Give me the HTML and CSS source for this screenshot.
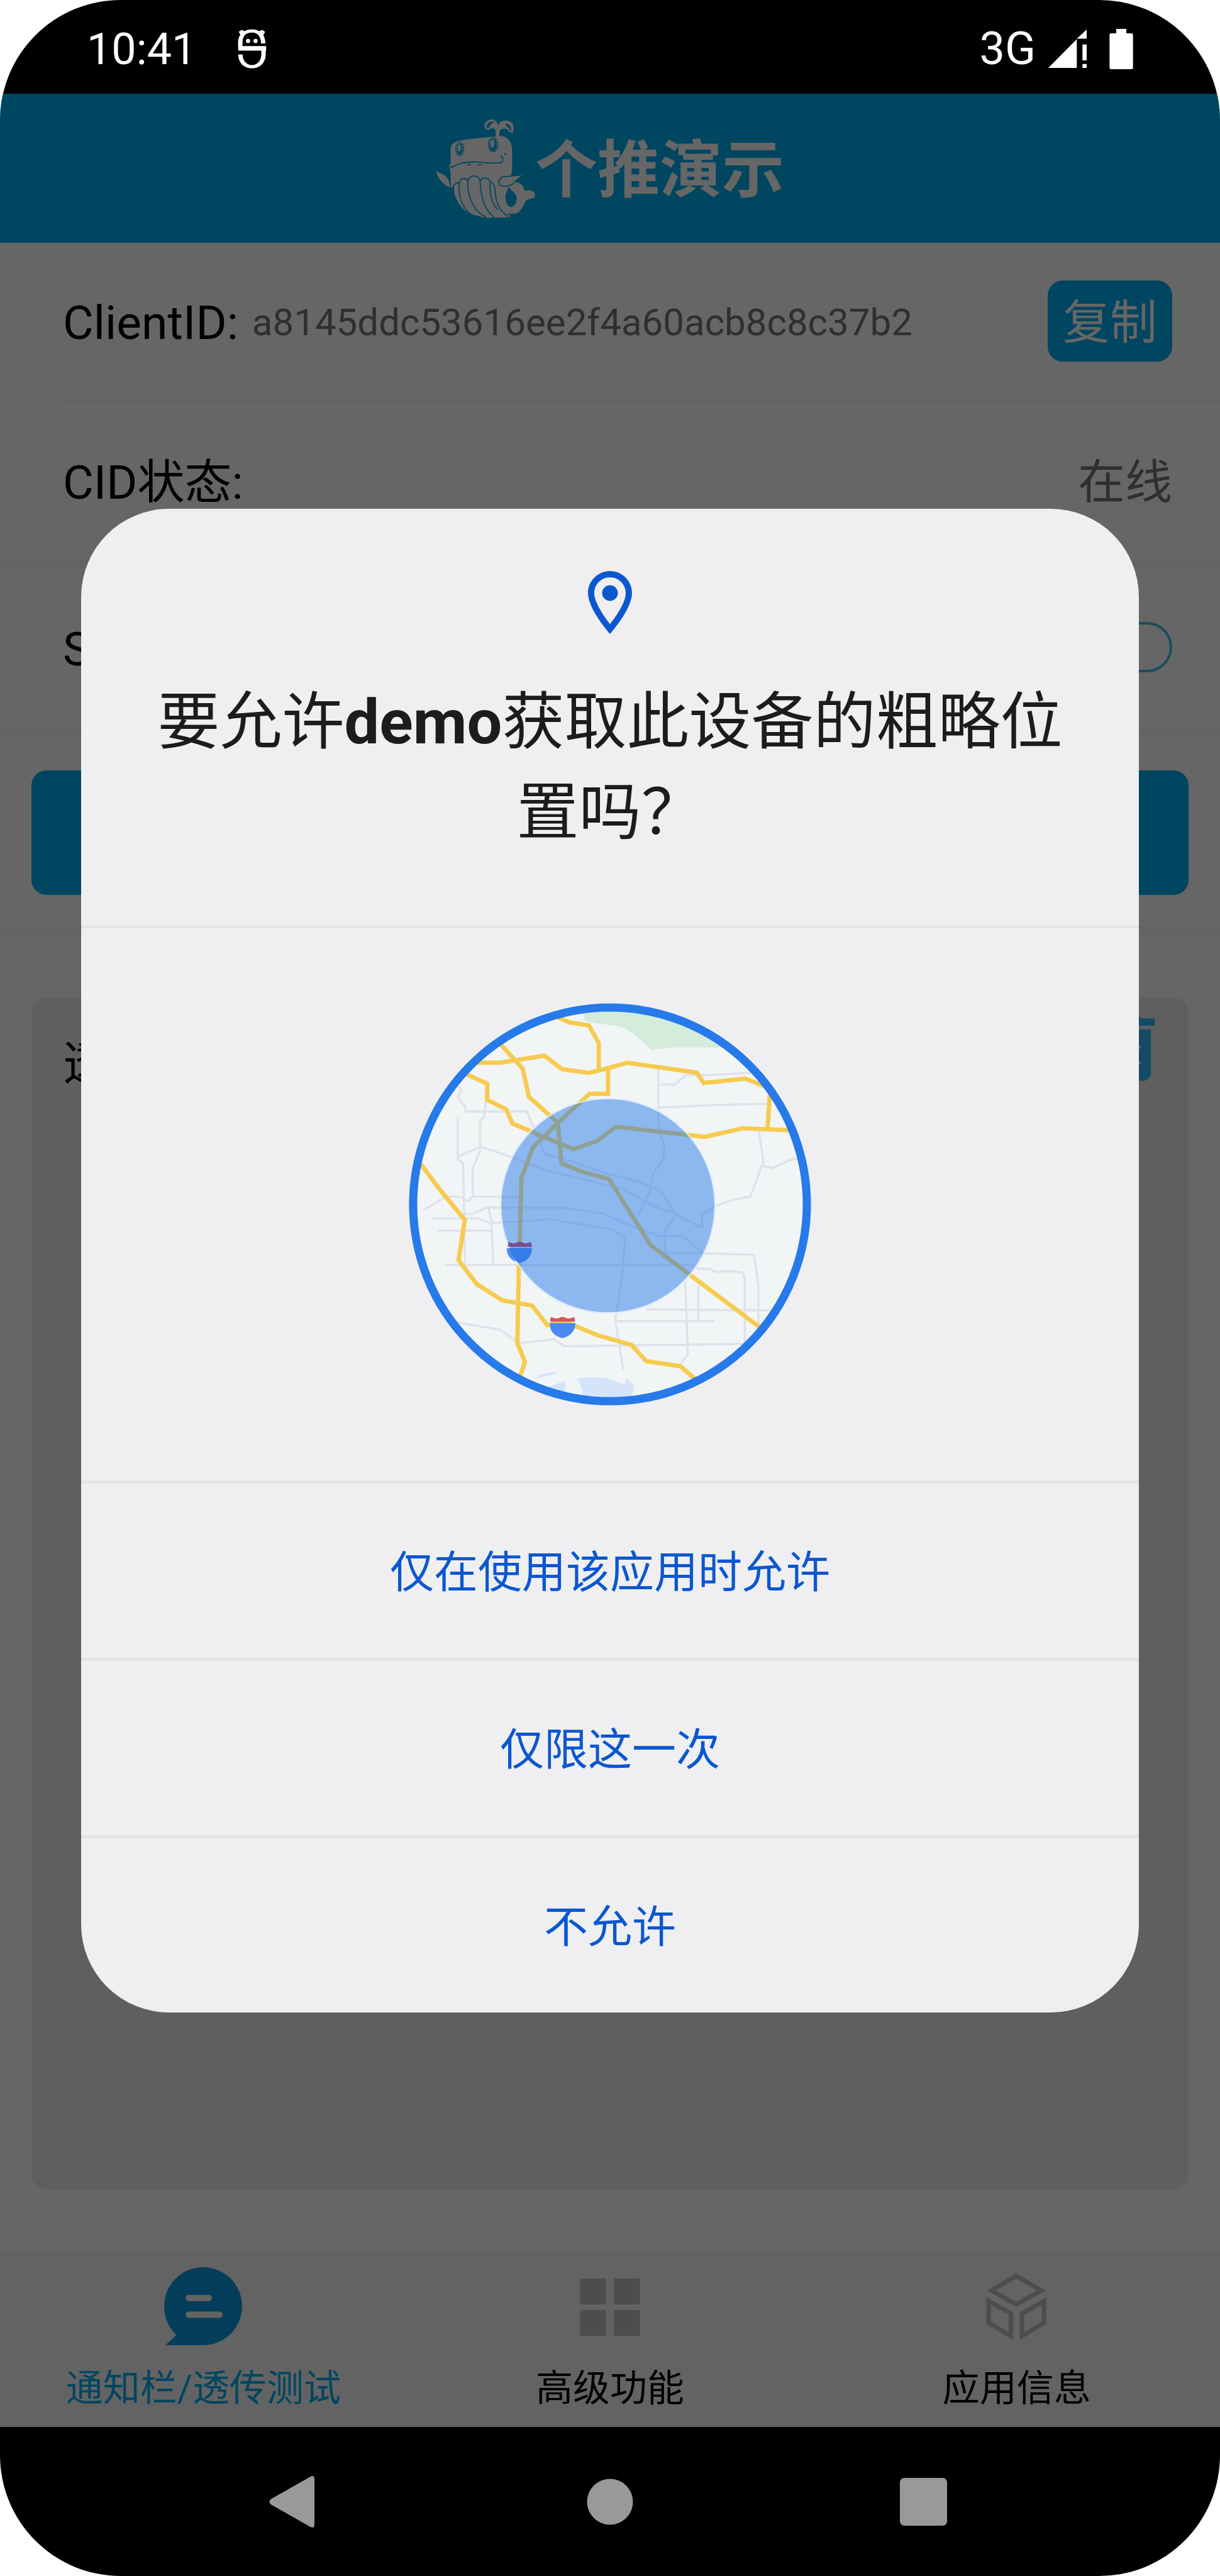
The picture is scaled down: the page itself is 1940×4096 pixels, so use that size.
FILE: index.html
```html
<!DOCTYPE html>
<html lang="zh-CN">
<head>
    <meta charset="UTF-8">
    <meta name="viewport" content="width=device-width, initial-scale=1.0">
    <title>个推演示</title>
    <link rel="stylesheet" href="styles.css">
</head>
<body>
    <div class="phone">
        <div class="status-bar">
            <span class="time">10:41</span>
            <svg class="debug-icon" viewBox="918 152 112 216" preserveAspectRatio="none">
                <path d="M928 250V222C930 182 950 166 973 166S1015 182 1017 232M928 258H1018V290C1016 335 996 355 973 355S930 335 928 290" fill="none" stroke="#fff" stroke-width="17"/>
                <path d="M920 246h108v24h-108zM922 170l12-10 18 14-20 22zM1024 170l-12-10-18 14 20 22z" fill="#fff"/>
                <ellipse cx="958" cy="219" rx="8" ry="11" fill="#fff"/>
                <ellipse cx="987" cy="219" rx="8" ry="11" fill="#fff"/>
            </svg>
            <span class="network">3G</span>
            <svg class="signal-icon" viewBox="0 0 68 68">
                <path d="M0 68L50.5 17V68zM50.5 16.300L68 0V16.300zM60.500 26.500H68V54.500H60.500zM60.500 61H68V68H60.500z" fill="#fff"/>
            </svg>
            <svg class="battery-icon" viewBox="0 0 42 72">
                <path d="M12 0H30V8H39a3 3 0 0 1 3 3V69a3 3 0 0 1-3 3H3a3 3 0 0 1-3-3V11a3 3 0 0 1 3-3H12z" fill="#fff"/>
            </svg>
        </div>

        <div class="app">
            <header class="app-header">
                <!-- whale logo -->
                <svg class="logo" viewBox="18 16 530 530">
                    <g fill="#fff">
                        <path d="M98 382L96 300L90 262L97 255V180C98 155 112 142 132 136L180 126L298 113L365 107C400 108 420 135 425 175V290L419 322L480 314L432 354C470 352 486 372 492 400C515 392 540 398 546 416V436C530 440 508 444 496 456C486 480 470 510 446 521L400 522L420 538L380 543H330L285 544C220 530 180 520 150 480C120 440 114 410 115 372L104 384z"/>
                        <path d="M18 294L66 318C86 334 90 350 93 382C50 360 28 330 18 294z"/>
                        <path d="M338 112V78C330 62 314 62 302 74C282 78 272 56 281 38C295 16 330 12 344 36L351 52L358 38C374 20 410 20 426 40C436 56 434 80 428 88C412 94 408 82 402 74C386 64 366 66 358 82L356 112z"/>
                    </g>
                    <g fill="#00aeef">
                        <ellipse cx="146" cy="177" rx="24" ry="38"/>
                        <ellipse cx="324" cy="154" rx="28" ry="41"/>
                        <path d="M404 380L412 384C422 402 450 412 450 436C448 470 434 486 415 486C396 480 388 450 390 424C392 408 402 402 404 380z"/>
                        <path d="M289 66C286 36 312 24 334 34C318 38 304 48 301 66zM392 40C410 42 424 58 420 82C412 80 412 62 392 50z"/>
                    </g>
                    <g fill="none" stroke="#00aeef" stroke-width="6" stroke-linecap="round" stroke-linejoin="round">
                        <path d="M98 268L104 277C130 254 180 244 240 246C290 250 340 258 370 247C382 232 374 216 364 214M386 200l6 8M188 261h14M242 261h20"/>
                        <path d="M108 382C112 368 126 354 142 358M145 356C150 330 176 328 189 345M191 345C198 314 240 312 254 344M258 342C272 326 300 328 306 352C326 356 332 370 334 400C336 450 350 500 400 534"/>
                        <path d="M142 360C138 430 160 490 206 526M188 348C186 430 220 510 286 541M254 346C258 440 284 510 330 541M308 356C304 430 318 470 350 500"/>
                        <path d="M470 316L395 324C360 320 345 350 362 372C385 378 410 378 434 360"/>
                    </g>
                    <g fill="none" stroke="#fff" stroke-width="5">
                        <ellipse cx="146" cy="177" rx="18" ry="32" stroke-dasharray="12 5"/>
                        <ellipse cx="324" cy="154" rx="22" ry="35" stroke-dasharray="12 5"/>
                        <path d="M340 60V106"/>
                    </g>
                    <path d="M134 160l14-8 6 20-10 22-8-8zM308 140l16-16 8 24-8 22-12-6z" fill="#fff"/>
                </svg>
                <h1>个推演示</h1>
            </header>

            <div class="row">
                <span class="label">ClientID:</span>
                <span class="cid">a8145ddc53616ee2f4a60acb8c8c37b2</span>
                <button class="copy-btn" type="button">复制</button>
            </div>
            <div class="divider-thin"></div>
            <div class="row">
                <span class="label">CID状态:</span>
                <span class="value">在线</span>
            </div>
            <div class="divider"></div>
            <div class="row row-switch">
                <label class="label" for="sdk-switch">SDK开关:</label>
                <input class="switch" id="sdk-switch" type="checkbox" checked>
            </div>
            <div class="divider"></div>
            <div class="action">
                <button class="action-btn" type="button" aria-label="通知栏测试"></button>
            </div>
            <div class="divider"></div>

            <section class="log-card">
                <h2 class="label">透传</h2>
                <button class="trash-btn" type="button" aria-label="清除">
                    <svg viewBox="0 0 24 24" preserveAspectRatio="none">
                        <path d="M6 19c0 1.100.9 2 2 2h8c1.100 0 2-.9 2-2V7H6v12zm2.460-7.120l1.410-1.410L12 12.590l2.120-2.120 1.410 1.410L13.410 14l2.120 2.120-1.410 1.410L12 15.410l-2.120 2.120-1.410-1.410L10.590 14l-2.130-2.120zM15.500 4l-1-1h-5l-1 1H5v2h14V4z" fill="#32bbf8"/>
                    </svg>
                </button>
            </section>

            <nav class="tabs">
                <a class="tab active" href="#push">
                    <svg viewBox="0 0 138 138">
                        <path d="M2 138L22 120C8 107 0 90 0 69a69 69 0 1 1 81 68L72 138z" fill="#0d9be4"/>
                        <path d="M43.500 54.500H79M43.500 84H98" stroke="#f7f7f7" stroke-width="11" stroke-linecap="round"/>
                    </svg>
                    <span>通知栏/透传测试</span>
                </a>
                <a class="tab" href="#advanced">
                    <svg viewBox="0 0 138 138">
                        <g fill="#c0c0c0">
                            <rect x="16" y="20" width="46" height="46" rx="2"/>
                            <rect x="76" y="20" width="46" height="46" rx="2"/>
                            <rect x="16" y="76" width="46" height="46" rx="2"/>
                            <rect x="76" y="76" width="46" height="46" rx="2"/>
                        </g>
                    </svg>
                    <span>高级功能</span>
                </a>
                <a class="tab" href="#info">
                    <svg viewBox="0 0 138 138">
                        <path d="M68 15.500L112 41L68 66L24 41zM19 60L58.500 82V122L19 98zM117 60L78 82V122L117 98z" fill="none" stroke="#c0c0c0" stroke-width="8"/>
                    </svg>
                    <span>应用信息</span>
                </a>
            </nav>

            <div class="scrim">
                <div class="dialog" role="dialog" aria-labelledby="dialog-title">
                    <div class="dialog-head">
                        <svg class="pin" viewBox="0 0 24 24" fill="#0b57d0">
                            <path d="M12 2C8.130 2 5 5.130 5 9c0 5.250 7 13 7 13s7-7.750 7-13c0-3.870-3.130-7-7-7zM7 9c0-2.760 2.240-5 5-5s5 2.240 5 5c0 2.880-2.880 7.190-5 9.880C9.920 16.210 7 11.850 7 9z"/>
                            <circle cx="12" cy="9" r="2.500"/>
                        </svg>
                        <h2 class="dialog-title" id="dialog-title">要允许<strong>demo</strong>获取此设备的粗略位置吗&#xFF1F;</h2>
                    </div>
                    <div class="dialog-map">
                        <svg class="map" viewBox="50 50 1470 1472">
                            <clipPath id="map-clip"><circle cx="785" cy="786" r="712"/></clipPath>
                            <g clip-path="url(#map-clip)">
                                <rect x="50" y="50" width="1470" height="1472" fill="#f2f5f6"/>
                                <path d="M685 60L693 115C740 128 800 130 830 138C870 155 900 190 935 220L1020 212L1220 212V60z" fill="#d3ecdc"/>
                                <path d="M660 1425C700 1412 770 1418 800 1430L838 1445L845 1420L872 1445C878 1465 860 1480 862 1500H690C680 1480 690 1450 660 1425zM512 1425C530 1400 565 1402 598 1398C580 1412 545 1414 512 1425zM555 1455L620 1432L624 1480z" fill="#d5e4fb"/>
                                <g fill="none" stroke="#e0e1e9" stroke-width="8" stroke-linejoin="round">
                                    <path d="M232 355L240 370L228 392L256 430V446H480L505 505L545 600L620 622L780 675L890 702L970 738L1027 822L986 884V962L1312 970L1328 1085V1225"/>
                                    <path d="M228 465V620L248 636L255 1005M228 612L312 575L430 615L545 660L680 692L830 730L950 795L1010 815L1122 872V826L1165 795L1225 772L1298 758L1346 630L1330 520M1346 645L1378 654L1440 625L1490 615M333 395L325 465L310 482V588L283 655V755L265 775L235 758H185L102 808M283 758H450"/>
                                    <path d="M255 822L285 820L340 795L360 798H610L760 820L870 868L965 902H1050L1122 960M134 838H300L345 854L440 850L560 840L660 856L800 880L840 912L830 1040L804 1210L820 1310L834 1390M340 795L352 855L358 1005M153 882H352"/>
                                    <path d="M182 1008H1085L1110 1022H1150L1172 1034L1220 1030L1270 1036L1278 1055V1290M962 290V520L985 570L980 620L945 670L930 740L885 835M962 348H1022L1062 314L1160 312L1310 304M962 432L1190 422L1370 418"/>
                                    <path d="M1060 1070L1070 1332L1045 1368M1108 1085V1210M918 1170L1380 1174M804 1213H1168M225 1218L385 1245L450 1294L580 1280L620 1305L1290 1296"/>
                                </g>
                                <g fill="none" stroke="#f6cb4f" stroke-width="16" stroke-linejoin="miter">
                                    <path d="M590 100L635 120L708 132L744 196V292M290 268H385L545 242L610 292L708 305L770 290L848 268L1102 304L1128 342L1280 326L1360 358M1370 380L1361 512"/>
                                    <path d="M380 195L466 290L488 392L594 488L608 636L680 666L782 694L933 935L1075 1042L1345 1245"/>
                                    <path d="M250 305L336 345V404L405 438L428 490L545 540L652 585L742 552L806 502L1132 539L1270 508L1450 515M778 288V382H710L594 488L503 578L461 690L455 930M452 1000L446 1294L474 1362L455 1420"/>
                                    <path d="M85 628L165 735L254 843L231 990L298 1078L392 1137L500 1156L556 1228L620 1215L740 1265L864 1300L918 1360L1042 1378L1110 1436"/>
                                </g>
                                <path d="M566 1220H658C660 1250 635 1270 611 1275C585 1270 562 1250 566 1220z" fill="#4a8af4"/>
                                <path d="M568 1198L590 1204L611 1197L634 1204L655 1198L657 1215H566z" fill="#d35a50"/>
                                <path d="M408 946H499C500 976 478 996 454 1000C430 996 405 976 408 946z" fill="#4a8af4"/>
                                <path d="M412 924L434 930L454 922L476 930L496 924L499 942H410z" fill="#9a4a78"/>
                                <circle cx="777" cy="791" r="392" fill="#1b73e8" fill-opacity=".47" stroke="#dcebfc" stroke-width="5"/>
                                <path d="M415 946H499C500 976 478 996 454 1000C440 996 428 980 415 946z" fill="#347de6"/>
                                <path d="M414 924L434 930L454 922L476 930L496 924L499 940H412z" fill="#7a4d8c"/>
                            </g>
                            <circle cx="785" cy="786" r="720" fill="none" stroke="#267ae9" stroke-width="30"/>
                        </svg>
                    </div>
                    <button class="dialog-btn" type="button">仅在使用该应用时允许</button>
                    <button class="dialog-btn" type="button">仅限这一次</button>
                    <button class="dialog-btn" type="button">不允许</button>
                </div>
            </div>
        </div>

        <div class="nav-bar">
            <button type="button" aria-label="返回">
                <svg viewBox="0 0 120 120"><path d="M21 55L81 21Q89 16 89 24V96Q89 104 81 99L21 65Q14 60 21 55z" fill="#999"/></svg>
            </button>
            <button type="button" aria-label="主屏幕">
                <svg viewBox="0 0 120 120"><circle cx="60" cy="60" r="36.500" fill="#999"/></svg>
            </button>
            <button type="button" aria-label="最近任务">
                <svg viewBox="0 0 120 120"><rect x="22" y="22" width="75" height="76" rx="7" fill="#999"/></svg>
            </button>
        </div>
    </div>
</body>
</html>
```
FILE: styles.css
```css
* {
    box-sizing: border-box;
}
body {
    margin: 0;
    background: #fff;
    font-family: Roboto, "Noto Sans CJK SC", sans-serif;
    color: #000;
}
button {
    border: none;
    padding: 0;
    background: none;
    font-family: inherit;
    cursor: pointer;
}
svg {
    display: block;
    flex-shrink: 0;
}
h1, h2 {
    margin: 0;
}
.phone {
    display: flex;
    flex-direction: column;
    min-height: 100vh;
    background: #000;
    border-radius: 192px;
    overflow: hidden;
}

/* system status bar */
.status-bar {
    display: flex;
    align-items: center;
    height: 149px;
    padding: 6px 138px 0 138px;
    color: #fff;
    font-size: 70px;
}
.debug-icon {
    width: 46px;
    height: 65px;
    margin-left: 66px;
}
.network {
    margin-left: auto;
    font-size: 72px;
}
.signal-icon {
    width: 61px;
    height: 61px;
    margin-left: 20px;
}
.battery-icon {
    width: 38px;
    height: 64px;
    margin-left: 36px;
}

/* app */
.app {
    position: relative;
    display: flex;
    flex: 1;
    flex-direction: column;
    background: #fff;
}
.app-header {
    display: flex;
    align-items: center;
    justify-content: center;
    height: 237px;
    background: #00aeef;
    color: #fff;
}
.logo {
    width: 158px;
    height: 158px;
}
.app-header h1 {
    padding-top: 6px;
    font-size: 99px;
    font-weight: 700;
    line-height: 144px;
}
.row {
    display: flex;
    align-items: center;
    min-height: 248px;
    padding: 0 76px 0 100px;
    line-height: 110px;
}
.row-switch {
    min-height: 254px;
}
.label {
    padding-top: 6px;
    font-size: 75px;
    font-weight: 400;
}
.cid {
    margin-left: 22px;
    padding-top: 6px;
    font-size: 60px;
    color: #757575;
}
.value {
    margin-left: auto;
    padding-top: 6px;
    font-size: 75px;
    color: #757575;
}
.copy-btn {
    margin-left: auto;
    padding: 5px 24px 0;
    border-radius: 24px;
    background: #00aeef;
    color: #fff;
    font-size: 75px;
    line-height: 124px;
}
.divider-thin {
    height: 6px;
    margin-left: 100px;
    background: #f7f7f7;
}
.divider {
    height: 14px;
    background: #f7f7f7;
}
.switch {
    appearance: none;
    width: 150px;
    height: 80px;
    margin: 0 0 0 auto;
    border: 4px solid #46b9e8;
    border-radius: 40px;
}
.action {
    padding: 55px 50px 50px;
}
.action-btn {
    display: block;
    width: 100%;
    height: 198px;
    border-radius: 24px;
    background: #00aeef;
}
.log-card {
    display: flex;
    flex: 1;
    align-items: flex-start;
    justify-content: space-between;
    margin: 99px 50px;
    padding: 10px 22px 0 50px;
    border-radius: 24px;
    background: #eee;
    line-height: 110px;
}
.log-card .label {
    padding-top: 40px;
}
.trash-btn svg {
    width: 151px;
    height: 140px;
}
.tabs {
    display: grid;
    grid-template-columns: repeat(3, 1fr);
    background: #f7f7f7;
}
.tab {
    display: flex;
    flex-direction: column;
    align-items: center;
    gap: 26px;
    padding: 25px 0 18px;
    color: #000;
    font-size: 59px;
    line-height: 86px;
    text-decoration: none;
}
.tab svg {
    width: 124px;
    height: 124px;
}
.tab.active {
    color: #00aeef;
}

/* permission dialog */
.scrim {
    position: absolute;
    inset: 0;
    display: flex;
    align-items: center;
    justify-content: center;
    padding: 0 129px;
    background: rgba(0, 0, 0, 0.6);
}
.dialog {
    flex: 1;
    border-radius: 140px;
    background: #efeff1;
    overflow: hidden;
}
.dialog-head {
    padding: 89px 100px 107px;
}
.pin {
    width: 120px;
    height: 120px;
    margin: 0 auto 58px;
}
.dialog-title {
    color: #1a1c1e;
    font-size: 99px;
    font-weight: 400;
    line-height: 144px;
    text-align: center;
}
.dialog-map {
    padding: 119px 0;
    border-top: 5px solid #e3e4e6;
}
.map {
    width: 640px;
    height: 640px;
    margin: 0 auto;
}
.dialog-btn {
    display: block;
    width: 100%;
    padding-top: 8px;
    border-top: 5px solid #e3e4e6;
    color: #0b57d0;
    font-size: 70px;
    line-height: 269px;
}

/* system navigation */
.nav-bar {
    display: flex;
    align-items: center;
    justify-content: center;
    gap: 379px;
    height: 237px;
}
.nav-bar svg {
    width: 120px;
    height: 120px;
}
```
